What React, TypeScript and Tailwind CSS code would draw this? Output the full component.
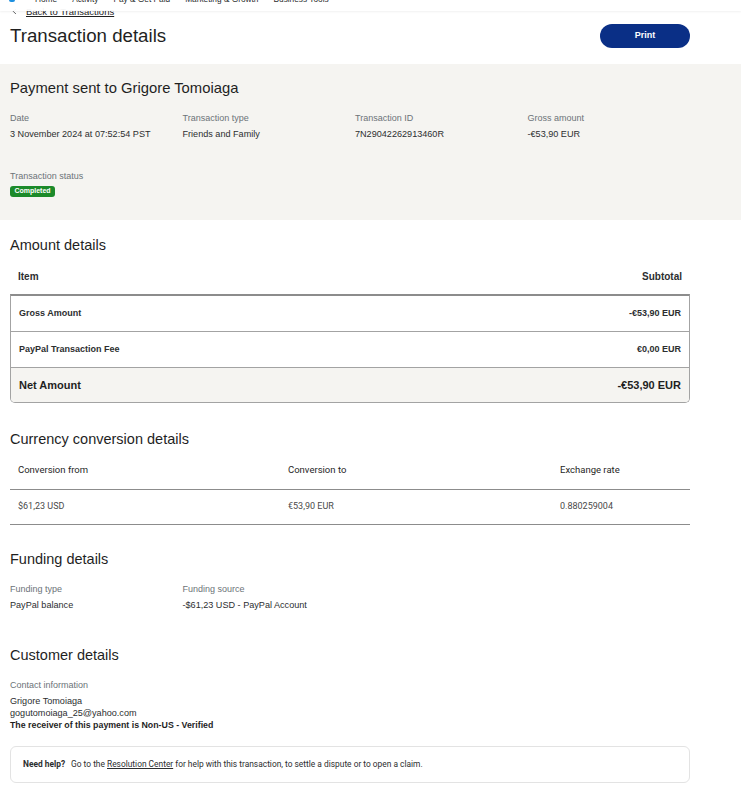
import { ChevronLeft } from 'lucide-react';

const summary = [
  { label: 'Date', value: '3 November 2024 at 07:52:54 PST' },
  { label: 'Transaction type', value: 'Friends and Family' },
  { label: 'Transaction ID', value: '7N29042262913460R' },
  { label: 'Gross amount', value: '-€53,90 EUR' },
];

const amountRows = [
  { item: 'Gross Amount', value: '-€53,90 EUR' },
  { item: 'PayPal Transaction Fee', value: '€0,00 EUR' },
];

const navItems = ['Home', 'Activity', 'Pay & Get Paid', 'Marketing & Growth', 'Business Tools'];

const SectionTitle = ({ children, className = '' }: { children: string; className?: string }) => (
  <h2 className={`text-[14.5px] leading-[18px] text-[#1f1f1f] ${className}`}>{children}</h2>
);

const App = () => {
  return (
    <div className="relative min-h-screen bg-white font-['Liberation_Sans',Arial,sans-serif] text-[#2c2e2f]">
      {/* top nav, scrolled mostly out of view */}
      <div className="absolute left-0 right-0 top-0 z-10 h-[11px] overflow-hidden bg-white/95 shadow-[0_1px_2px_rgba(0,0,0,0.06)]">
        <div className="-mt-[6px] flex items-start pl-[9px] text-[8.3px] leading-[11px] text-[#2c2e2f]">
          <span className="mr-[20px] mt-[1px] h-[7px] w-[6px] rounded-[2px] bg-[#1e90e0]" />
          {navItems.map((n) => (
            <span key={n} className="mr-[15px] whitespace-nowrap">{n}</span>
          ))}
        </div>
      </div>

      <div className="px-[10px]">
        <div className="flex h-[24px] items-start pt-[6px] text-[9.5px] leading-[12px]">
          <ChevronLeft className="mt-[1px] h-[9px] w-[9px] text-[#2c2e2f]" strokeWidth={2} />
          <a className="ml-[7px] text-[#1f1f1f] underline underline-offset-1">Back to Transactions</a>
        </div>
        <div className="flex h-[24px] w-[680px] items-center justify-between">
          <h1 className="text-[18.7px] leading-[24px] text-[#1f1f1f]">Transaction details</h1>
          <button className="flex h-[24px] w-[90px] items-center justify-center rounded-full bg-[#0a2f86] text-[9px] font-bold text-white">
            Print
          </button>
        </div>
      </div>

      <div className="mt-[16px] bg-[#f5f4f1] px-[10px] pb-[23px] pt-[14px]">
        <div className="text-[14.8px] leading-[20px] text-[#1f1f1f]">Payment sent to Grigore Tomoiaga</div>
        <div className="mt-[14px] grid w-[690px] grid-cols-4">
          {summary.map((s) => (
            <div key={s.label}>
              <div className="text-[9px] leading-[12px] text-[#6c7378]">{s.label}</div>
              <div className="mt-[4px] text-[9.1px] leading-[12px] text-[#2c2e2f]">{s.value}</div>
            </div>
          ))}
        </div>
        <div className="mt-[30px] text-[9px] leading-[12px] text-[#6c7378]">Transaction status</div>
        <span className="mt-[4px] flex h-[11px] w-[45px] items-center justify-center rounded-[3px] bg-[#1c8a2a] text-[7px] font-bold text-white">
          Completed
        </span>
      </div>

      <div className="px-[10px]">
        <SectionTitle className="mt-[16px]">Amount details</SectionTitle>
        <div className="flex w-[680px] justify-between px-[8px] pb-[11px] pt-[17px] text-[10px] font-bold leading-[12px] text-[#2c2e2f]">
          <span>Item</span>
          <span>Subtotal</span>
        </div>
        <div className="w-[680px] overflow-hidden rounded-b-[5px] border border-t-2 border-[#a3a3a3] border-t-[#8c8c8c]">
          {amountRows.map((r) => (
            <div
              key={r.item}
              className="flex h-[36px] items-center justify-between border-b border-[#a3a3a3] px-[8px] text-[9px] font-bold text-[#2c2e2f]"
            >
              <span>{r.item}</span>
              <span>{r.value}</span>
            </div>
          ))}
          <div className="flex h-[34px] items-center justify-between bg-[#f5f4f1] px-[8px] text-[11px] font-bold text-[#1f1f1f]">
            <span>Net Amount</span>
            <span>-€53,90 EUR</span>
          </div>
        </div>

        <SectionTitle className="mt-[27px]">Currency conversion details</SectionTitle>
        <div className="w-[680px] font-['Roboto',Arial,sans-serif]">
          <div className="grid grid-cols-[270px_272px_1fr] border-b border-[#8c8c8c] pb-[13px] pt-[16px] text-[9.5px] leading-[12px] text-[#1f1f1f]">
            <span className="pl-[8px]">Conversion from</span>
            <span className="pl-[8px]">Conversion to</span>
            <span className="pl-[8px]">Exchange rate</span>
          </div>
          <div className="grid grid-cols-[270px_272px_1fr] border-b border-[#8c8c8c] pb-[12px] pt-[10px] text-[9px] leading-[12px] text-[#4a4a4a]">
            <span className="pl-[8px]">$61,23 USD</span>
            <span className="pl-[8px]">€53,90 EUR</span>
            <span className="pl-[8px]">0.880259004</span>
          </div>
        </div>

        <SectionTitle className="mt-[25px]">Funding details</SectionTitle>
        <div className="mt-[15px] grid w-[690px] grid-cols-4">
          <div>
            <div className="text-[9px] leading-[12px] text-[#6c7378]">Funding type</div>
            <div className="mt-[4px] text-[9.1px] leading-[12px]">PayPal balance</div>
          </div>
          <div className="col-span-2">
            <div className="text-[9px] leading-[12px] text-[#6c7378]">Funding source</div>
            <div className="mt-[4px] text-[9.1px] leading-[12px]">-$61,23 USD - PayPal Account</div>
          </div>
        </div>

        <SectionTitle className="mt-[35px]">Customer details</SectionTitle>
        <div className="mt-[15px] text-[9px] leading-[12px] text-[#6c7378]">Contact information</div>
        <div className="mt-[4px] text-[9.1px] leading-[12px]">Grigore Tomoiaga</div>
        <div className="text-[9.1px] leading-[12px]">gogutomoiaga_25@yahoo.com</div>
        <div className="text-[8.8px] font-bold leading-[12px] text-[#1f1f1f]">
          The receiver of this payment is Non-US - Verified
        </div>

        <div className="mt-[15px] flex h-[37px] w-[680px] items-center rounded-[6px] border border-[#e3e3e3] px-[12px] font-['Roboto',Arial,sans-serif] text-[8.4px] text-[#2c2e2f]">
          <span className="font-bold">Need help?</span>
          <span className="ml-[6px]">
            Go to the <a className="underline">Resolution Center</a> for help with this transaction, to settle a dispute or to open a claim.
          </span>
        </div>
      </div>
    </div>
  );
};

export default App;
